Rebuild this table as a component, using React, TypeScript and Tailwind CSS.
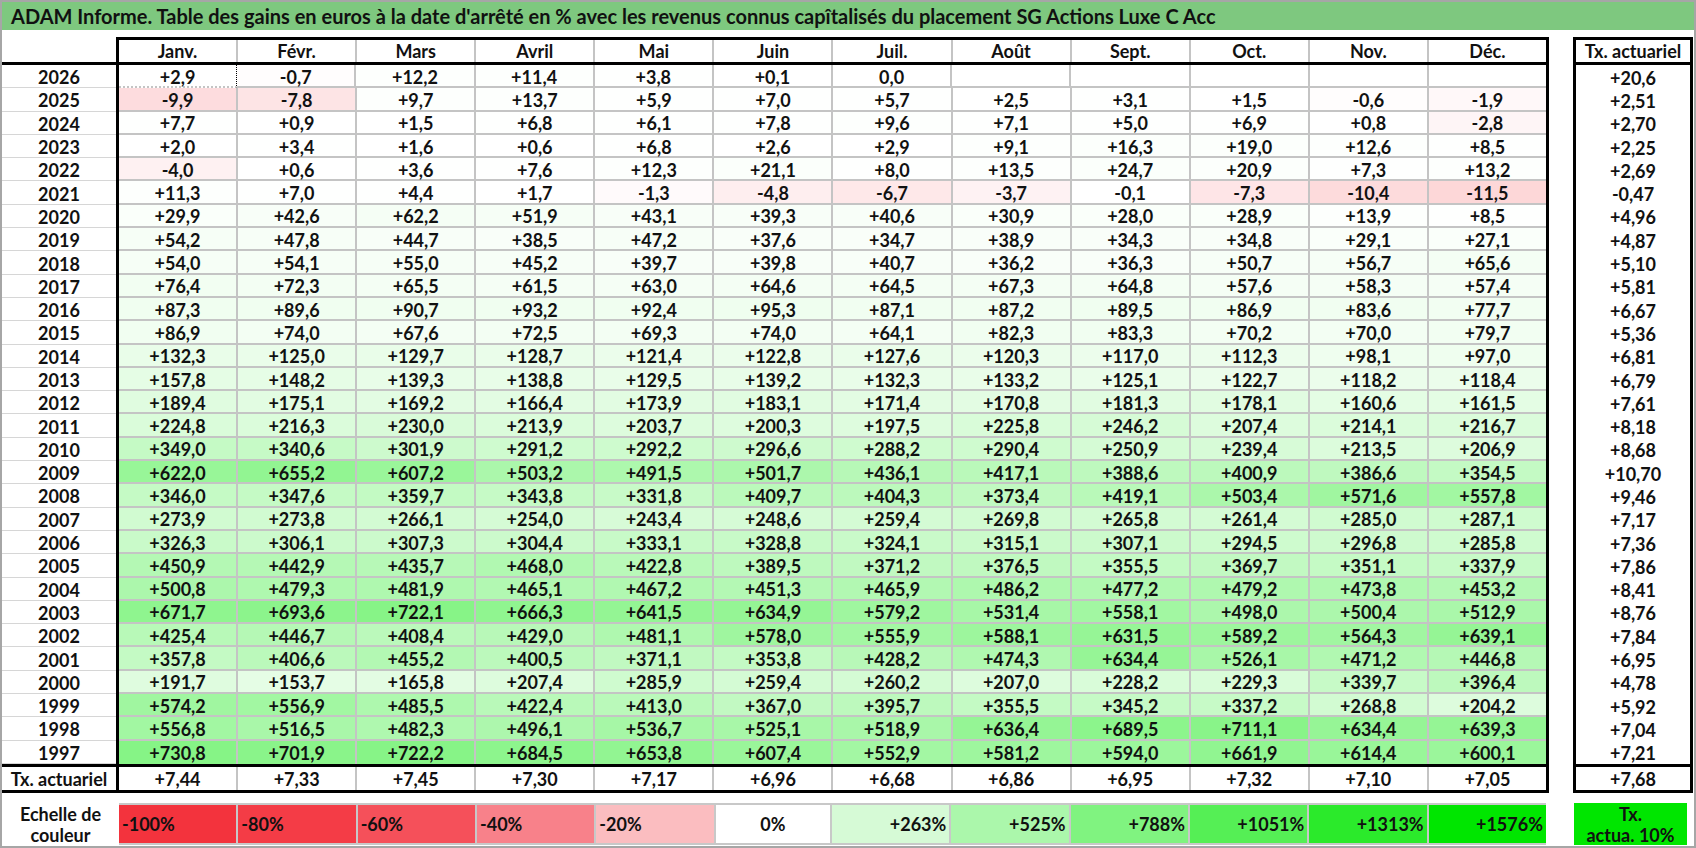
import React from "react";

const months = ["Janv.", "Févr.", "Mars", "Avril", "Mai", "Juin", "Juil.", "Août", "Sept.", "Oct.", "Nov.", "Déc."];

const raw: [string, string, string][] = [
  ["2026", "+2,9 -0,7 +12,2 +11,4 +3,8 +0,1 0,0 _ _ _ _ _", "+20,6"],
  ["2025", "-9,9 -7,8 +9,7 +13,7 +5,9 +7,0 +5,7 +2,5 +3,1 +1,5 -0,6 -1,9", "+2,51"],
  ["2024", "+7,7 +0,9 +1,5 +6,8 +6,1 +7,8 +9,6 +7,1 +5,0 +6,9 +0,8 -2,8", "+2,70"],
  ["2023", "+2,0 +3,4 +1,6 +0,6 +6,8 +2,6 +2,9 +9,1 +16,3 +19,0 +12,6 +8,5", "+2,25"],
  ["2022", "-4,0 +0,6 +3,6 +7,6 +12,3 +21,1 +8,0 +13,5 +24,7 +20,9 +7,3 +13,2", "+2,69"],
  ["2021", "+11,3 +7,0 +4,4 +1,7 -1,3 -4,8 -6,7 -3,7 -0,1 -7,3 -10,4 -11,5", "-0,47"],
  ["2020", "+29,9 +42,6 +62,2 +51,9 +43,1 +39,3 +40,6 +30,9 +28,0 +28,9 +13,9 +8,5", "+4,96"],
  ["2019", "+54,2 +47,8 +44,7 +38,5 +47,2 +37,6 +34,7 +38,9 +34,3 +34,8 +29,1 +27,1", "+4,87"],
  ["2018", "+54,0 +54,1 +55,0 +45,2 +39,7 +39,8 +40,7 +36,2 +36,3 +50,7 +56,7 +65,6", "+5,10"],
  ["2017", "+76,4 +72,3 +65,5 +61,5 +63,0 +64,6 +64,5 +67,3 +64,8 +57,6 +58,3 +57,4", "+5,81"],
  ["2016", "+87,3 +89,6 +90,7 +93,2 +92,4 +95,3 +87,1 +87,2 +89,5 +86,9 +83,6 +77,7", "+6,67"],
  ["2015", "+86,9 +74,0 +67,6 +72,5 +69,3 +74,0 +64,1 +82,3 +83,3 +70,2 +70,0 +79,7", "+5,36"],
  ["2014", "+132,3 +125,0 +129,7 +128,7 +121,4 +122,8 +127,6 +120,3 +117,0 +112,3 +98,1 +97,0", "+6,81"],
  ["2013", "+157,8 +148,2 +139,3 +138,8 +129,5 +139,2 +132,3 +133,2 +125,1 +122,7 +118,2 +118,4", "+6,79"],
  ["2012", "+189,4 +175,1 +169,2 +166,4 +173,9 +183,1 +171,4 +170,8 +181,3 +178,1 +160,6 +161,5", "+7,61"],
  ["2011", "+224,8 +216,3 +230,0 +213,9 +203,7 +200,3 +197,5 +225,8 +246,2 +207,4 +214,1 +216,7", "+8,18"],
  ["2010", "+349,0 +340,6 +301,9 +291,2 +292,2 +296,6 +288,2 +290,4 +250,9 +239,4 +213,5 +206,9", "+8,68"],
  ["2009", "+622,0 +655,2 +607,2 +503,2 +491,5 +501,7 +436,1 +417,1 +388,6 +400,9 +386,6 +354,5", "+10,70"],
  ["2008", "+346,0 +347,6 +359,7 +343,8 +331,8 +409,7 +404,3 +373,4 +419,1 +503,4 +571,6 +557,8", "+9,46"],
  ["2007", "+273,9 +273,8 +266,1 +254,0 +243,4 +248,6 +259,4 +269,8 +265,8 +261,4 +285,0 +287,1", "+7,17"],
  ["2006", "+326,3 +306,1 +307,3 +304,4 +333,1 +328,8 +324,1 +315,1 +307,1 +294,5 +296,8 +285,8", "+7,36"],
  ["2005", "+450,9 +442,9 +435,7 +468,0 +422,8 +389,5 +371,2 +376,5 +355,5 +369,7 +351,1 +337,9", "+7,86"],
  ["2004", "+500,8 +479,3 +481,9 +465,1 +467,2 +451,3 +465,9 +486,2 +477,2 +479,2 +473,8 +453,2", "+8,41"],
  ["2003", "+671,7 +693,6 +722,1 +666,3 +641,5 +634,9 +579,2 +531,4 +558,1 +498,0 +500,4 +512,9", "+8,76"],
  ["2002", "+425,4 +446,7 +408,4 +429,0 +481,1 +578,0 +555,9 +588,1 +631,5 +589,2 +564,3 +639,1", "+7,84"],
  ["2001", "+357,8 +406,6 +455,2 +400,5 +371,1 +353,8 +428,2 +474,3 +634,4 +526,1 +471,2 +446,8", "+6,95"],
  ["2000", "+191,7 +153,7 +165,8 +207,4 +285,9 +259,4 +260,2 +207,0 +228,2 +229,3 +339,7 +396,4", "+4,78"],
  ["1999", "+574,2 +556,9 +485,5 +422,4 +413,0 +367,0 +395,7 +355,5 +345,2 +337,2 +268,8 +204,2", "+5,92"],
  ["1998", "+556,8 +516,5 +482,3 +496,1 +536,7 +525,1 +518,9 +636,4 +689,5 +711,1 +634,4 +639,3", "+7,04"],
  ["1997", "+730,8 +701,9 +722,2 +684,5 +653,8 +607,4 +552,9 +581,2 +594,0 +661,9 +614,4 +600,1", "+7,21"],
];

const txRow = "+7,44 +7,33 +7,45 +7,30 +7,17 +6,96 +6,68 +6,86 +6,95 +7,32 +7,10 +7,05".split(" ");

const rows = raw.map(([y, v, t]) => ({ year: y, vals: v.split(" ").map((s) => (s === "_" ? "" : s)), tx: t }));

function cellColor(s: string): string {
  if (!s) return "#ffffff";
  const v = parseFloat(s.replace(",", "."));
  if (v >= 0) {
    const t = Math.min(1, v / 1576);
    const r = Math.round(255 - t * 262);
    const g = Math.round(255 - t * 24);
    return `rgb(${Math.max(0, r)},${g},${Math.max(0, r)})`;
  }
  const t = Math.min(1, -v / 20);
  const r = Math.round(255 - t * 4);
  const g = Math.round(255 - t * 70);
  const b = Math.round(255 - t * 67);
  return `rgb(${r},${g},${b})`;
}

const legend: { label: string; bg: string; align: string }[] = [
  { label: "-100%", bg: "bg-[#f3333d]", align: "justify-start pl-[3px]" },
  { label: "-80%", bg: "bg-[#f43c46]", align: "justify-start pl-[3px]" },
  { label: "-60%", bg: "bg-[#f5505a]", align: "justify-start pl-[3px]" },
  { label: "-40%", bg: "bg-[#f8818a]", align: "justify-start pl-[3px]" },
  { label: "-20%", bg: "bg-[#fbbdc0]", align: "justify-start pl-[3px]" },
  { label: "0%", bg: "bg-white", align: "justify-center" },
  { label: "+263%", bg: "bg-[#d6fad6]", align: "justify-end pr-[3px]" },
  { label: "+525%", bg: "bg-[#abf7ab]", align: "justify-end pr-[3px]" },
  { label: "+788%", bg: "bg-[#80f380]", align: "justify-end pr-[3px]" },
  { label: "+1051%", bg: "bg-[#55ef55]", align: "justify-end pr-[3px]" },
  { label: "+1313%", bg: "bg-[#2bea2b]", align: "justify-end pr-[3px]" },
  { label: "+1576%", bg: "bg-[#00e600]", align: "justify-end pr-[3px]" },
];

export default function App() {
  return (
    <div className="w-[1696px] h-[848px] border-2 border-[#a6a6a6] bg-white flex flex-col font-['Lato','Liberation_Sans',sans-serif] font-bold text-[#111] text-[18px] leading-none overflow-hidden">
      <div className="h-[28px] shrink-0 bg-[#7ec87f] flex items-center pl-[9px] text-[20px] whitespace-nowrap">
        ADAM Informe. Table des gains en euros à la date d'arrêté en % avec les revenus connus capîtalisés du placement SG Actions Luxe C Acc
      </div>
      <div className="mt-[7px] flex shrink-0">
        <div className="w-[1547px] flex flex-col">
          {/* header */}
          <div className="h-[28px] flex">
            <div className="w-[114px] border-b-[3px] border-black" />
            <div className="flex-1 flex border-[3px] border-black">
              {months.map((m, i) => (
                <div
                  key={m}
                  className={`flex-1 flex items-center justify-center ${i < 11 ? "border-r-2 border-[#c4c4c4]" : ""}`}
                >
                  {m}
                </div>
              ))}
            </div>
          </div>
          {/* data */}
          <div className="h-[699px] flex flex-col">
            {rows.map((r, ri) => (
              <div key={r.year} className="flex-1 flex min-h-0">
                <div className="w-[114px] border-b border-[#d6d6d6] flex items-center justify-center pt-[2px]">{r.year}</div>
                <div className="flex-1 flex border-x-[3px] border-black">
                  {r.vals.map((v, i) => {
                    const dotted = ri === 0 && i === 0;
                    const right = i < 11 ? (dotted ? "border-r border-dotted border-r-black" : "border-r-2 border-r-[#c4c4c4]") : "";
                    const bottom = ri < rows.length - 1 ? "border-b-2 border-b-[#c4c4c4]" : "";
                    return (
                      <div
                        key={i}
                        className={`flex-1 flex items-center justify-center pt-[2px] ${right} ${bottom}`}
                        style={{ backgroundColor: cellColor(v) }}
                      >
                        {v}
                      </div>
                    );
                  })}
                </div>
              </div>
            ))}
          </div>
          {/* tx row */}
          <div className="h-[29px] flex border-y-[3px] border-black">
            <div className="w-[114px] flex items-center justify-center whitespace-nowrap">Tx. actuariel</div>
            <div className="flex-1 flex border-l-[3px] border-r-[3px] border-black">
              {txRow.map((v, i) => (
                <div
                  key={i}
                  className={`flex-1 flex items-center justify-center ${i < 11 ? "border-r-2 border-[#c4c4c4]" : ""}`}
                >
                  {v}
                </div>
              ))}
            </div>
          </div>
        </div>
        {/* right Tx box */}
        <div className="ml-[24px] w-[120px] h-[756px] flex flex-col border-[3px] border-black">
          <div className="h-[25px] shrink-0 border-b-[3px] border-black flex items-center justify-center whitespace-nowrap">
            Tx. actuariel
          </div>
          <div className="h-[699px] shrink-0 flex flex-col">
            {rows.map((r) => (
              <div key={r.year} className="flex-1 min-h-0 flex items-center justify-center pt-[2px]">
                {r.tx}
              </div>
            ))}
          </div>
          <div className="flex-1 min-h-0 border-t-[3px] border-black flex items-center justify-center">+7,68</div>
        </div>
      </div>
      {/* legend */}
      <div className="mt-[10px] h-[42px] flex shrink-0">
        <div className="w-[117px] flex flex-col items-center justify-center gap-[3px]">
          <span>Echelle de</span>
          <span>couleur</span>
        </div>
        <div className="w-[1427px] flex border-y-2 border-[#c8c8c8]">
          {legend.map((l, i) => (
            <div
              key={l.label}
              className={`flex-1 flex items-center ${l.align} ${l.bg} ${i < 11 ? "border-r-2 border-[#c8c8c8]" : ""}`}
            >
              {l.label}
            </div>
          ))}
        </div>
        <div className="ml-[28px] w-[113px] bg-[#00e600] flex flex-col items-center justify-center gap-[3px]">
          <span>Tx.</span>
          <span>actua. 10%</span>
        </div>
      </div>
    </div>
  );
}
